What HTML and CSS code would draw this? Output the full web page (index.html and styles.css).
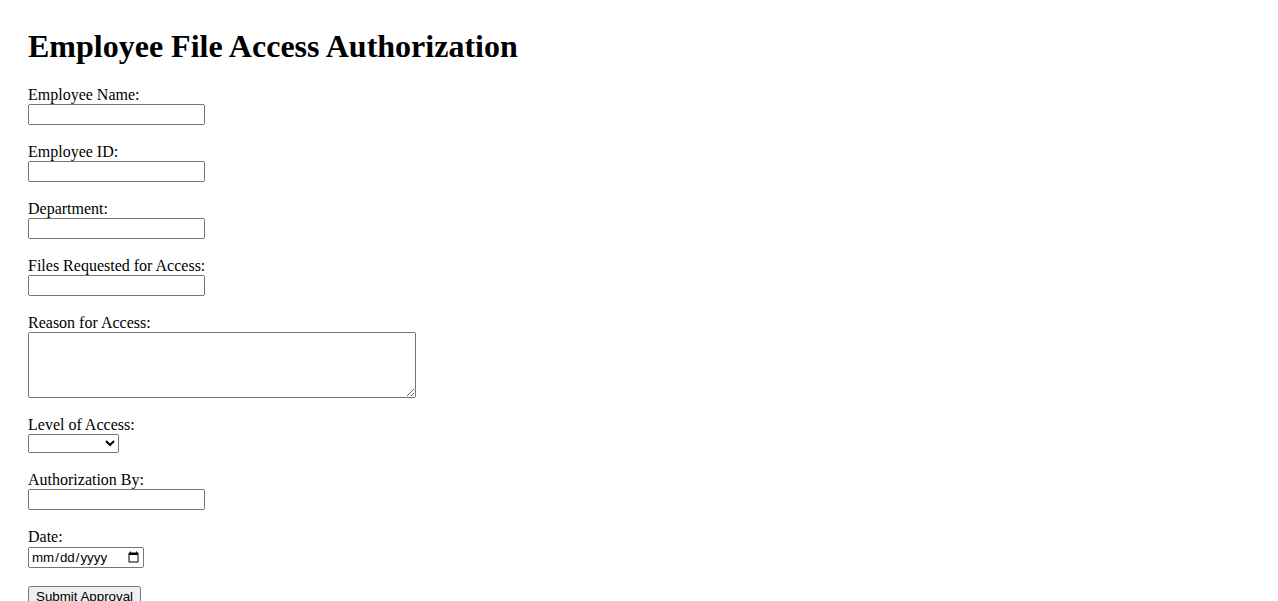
FILE: index.html
```html
<!DOCTYPE html>
<html lang="en">
<head>
  <meta charset="UTF-8" />
  <title>Employee File Access Authorization</title>
  <link rel="stylesheet" href="styles.css">
</head>
<body>

<h1>Employee File Access Authorization</h1>

<form id="accessForm">
  <label for="empName">Employee Name:</label><br>
  <input type="text" id="empName" name="empName"><br><br>

  <label for="empId">Employee ID:</label><br>
  <input type="text" id="empId" name="empId"><br><br>

  <label for="dept">Department:</label><br>
  <input type="text" id="dept" name="dept"><br><br>

  <label for="files">Files Requested for Access:</label><br>
  <input type="text" id="files" name="files"><br><br>

  <label for="reason">Reason for Access:</label><br>
  <textarea id="reason" name="reason" class="reason"></textarea><br><br>

  <label for="level">Level of Access:</label><br>
  <select id="level" name="level" class="level">
    <option value=""></option>
    <option value="read">Read Only</option>
    <option value="write">Read/Write</option>
  </select><br><br>

  <label for="authBy">Authorization By:</label><br>
  <input type="text" id="authBy" name="authBy"><br><br>

  <label for="date">Date:</label><br>
  <input type="date" id="date" name="date" class="date"><br><br>

  <button type="submit">Submit Approval</button>
</form>

</body>
</html>
```

FILE: styles.css
```css
body {
  font-family: "Liberation Serif", "Times New Roman", serif;
  margin: 28px;
}
h1 { margin: 0 0 21px; }
input, select, textarea, button { font-family: "Liberation Sans", Arial, sans-serif; }
input[type="text"] { width: 169px; }
.reason { width: 382px; height: 60px; vertical-align: bottom; }
.level { width: 91px; height: 19px; }
.date { box-sizing: border-box; width: 116px; height: 21px; margin-top: 1px; }
```
